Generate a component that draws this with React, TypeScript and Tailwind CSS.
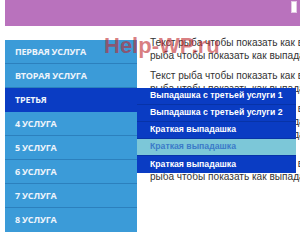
// Вертикальное меню услуг с выпадашкой у третьего пункта.

const items = [
  'Первая услуга',
  'Вторая услуга',
  'Третья',
  '4 услуга',
  '5 услуга',
  '6 услуга',
  '7 услуга',
  '8 услуга',
]

const sub = [
  { label: 'Выпадашка с третьей услуги 1', hover: false },
  { label: 'Выпадашка с третьей услуги 2', hover: false },
  { label: 'Краткая выпадашка', hover: false },
  { label: 'Краткая выпадашка', hover: true },
  { label: 'Краткая выпадашка', hover: false },
]

const l1 = 'Текст рыба чтобы показать как выпадашка работает'
const l2 = 'рыба чтобы показать как выпадашка работает'

export default function App() {
  return (
    <div className="relative w-[300px] h-[248px] overflow-hidden bg-white font-['Open_Sans',sans-serif]">
      <div className="ml-[5px] h-[26px] bg-[#b972bd] flex justify-end">
        <div className="mt-[1px] mr-[3px] h-[12px] w-[6px] border border-[#e3c8e5] bg-white" />
      </div>

      <div className="flex mt-[14px]">
        <ul className="ml-[5px] w-[132px] shrink-0 bg-[#3b9bd8]">
          {items.map((it, i) => (
            <li
              key={it}
              className={
                i === 2
                  ? 'relative h-[24px] flex items-center pl-[10px] bg-[#0a3cc3] border-b border-[#0a3cc3]'
                  : 'relative h-[24px] flex items-center pl-[10px] border-b border-[#2c80bd] last:border-b-0'
              }
            >
              <span className="text-[9px] font-bold uppercase text-[#eef4fb] tracking-[-0.2px]">{it}</span>
              {i === 2 && (
                <ul className="absolute left-full top-0 z-10 w-[159px] bg-[#0a3cc3]">
                  {sub.map((s, j) => (
                    <li
                      key={j}
                      className={
                        s.hover
                          ? 'h-[17px] flex items-center pl-[13px] bg-[#7cc7d8] border-b border-[#0733a8]'
                          : 'h-[17px] flex items-center pl-[13px] border-b border-[#0733a8] last:border-b-0'
                      }
                    >
                      <span
                        className={
                          s.hover
                            ? "text-[8.7px] font-bold text-[#3b7bc9] whitespace-nowrap font-['Liberation_Sans',sans-serif]"
                            : "text-[8.7px] font-bold text-white whitespace-nowrap font-['Liberation_Sans',sans-serif]"
                        }
                      >
                        {s.label}
                      </span>
                    </li>
                  ))}
                </ul>
              )}
            </li>
          ))}
        </ul>

        <div className="ml-[13px] -mt-[4px] text-[10.1px] leading-[13px] text-[#333] whitespace-nowrap font-['Liberation_Sans',sans-serif]">
          <p>{l1}<br />{l2}</p>
          <p className="mt-[7px]">{l1}<br />{l2}</p>
          <p className="mt-[7px]">{l1}<br />{l2}<br />{l2}</p>
          <p className="mt-[16px]">{l1}<br />{l2}</p>
        </div>
      </div>

      <div className="pointer-events-none absolute left-[104px] top-[34px] z-20 text-[22px] leading-[24px] font-bold text-[#c0282e]/60 font-['Liberation_Sans',sans-serif]">
        Help-WP.ru
      </div>
    </div>
  )
}
